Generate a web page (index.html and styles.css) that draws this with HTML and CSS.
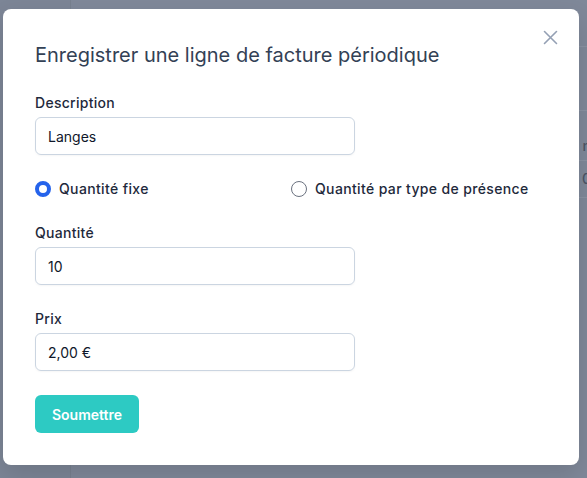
FILE: index.html
```html
<!DOCTYPE html>
<html lang="fr">
<head>
<meta charset="utf-8">
<title>Ligne de facture périodique</title>
<link rel="stylesheet" href="styles.css">
</head>
<body>
<div class="backdrop">
  <div class="bg-side"></div>
  <div class="bg-main">
    <div class="bg-row bg-head"></div>
    <div class="bg-row bg-r1"><span class="bg-text">n</span></div>
    <div class="bg-row bg-r2"><span class="bg-text">0</span></div>
    <div class="bg-row bg-r3"></div>
  </div>
</div>
<div class="modal">
  <button class="close" aria-label="Fermer">
    <svg width="15" height="15" viewBox="0 0 15 15"><path d="M1.5 1.5 L13.5 13.5 M13.5 1.5 L1.5 13.5" stroke="#94a0b4" stroke-width="1.6" stroke-linecap="round" fill="none"/></svg>
  </button>
  <h1 class="title">Enregistrer une ligne de facture périodique</h1>
  <div class="field">
    <label class="label">Description</label>
    <div class="input">Langes</div>
  </div>
  <div class="radios">
    <label class="radio"><span class="dot on"></span>Quantité fixe</label>
    <label class="radio"><span class="dot"></span>Quantité par type de présence</label>
  </div>
  <div class="field">
    <label class="label">Quantité</label>
    <div class="input">10</div>
  </div>
  <div class="field">
    <label class="label">Prix</label>
    <div class="input">2,00 €</div>
  </div>
  <button class="submit">Soumettre</button>
</div>
</body>
</html>
```
FILE: styles.css
```css
* { box-sizing: border-box; }
html, body { margin: 0; padding: 0; }
body {
  width: 587px;
  height: 478px;
  overflow: hidden;
  background: #7f8899;
  font-family: Inter, "Noto Sans", sans-serif;
  position: relative;
}
.backdrop {
  display: flex;
  height: 478px;
}
.bg-side {
  width: 70px;
  background: #7c8596;
}
.bg-main {
  flex: 1;
  border-left: 1px solid #77808f;
  padding-top: 46px;
}
.bg-row {
  border-top: 1px solid #8a92a2;
  display: flex;
  justify-content: flex-end;
  color: #4c5566;
  font-size: 14px;
  line-height: 16px;
}
.bg-head { height: 64px; }
.bg-r1 { height: 50px; align-items: flex-end; padding-bottom: 6px; }
.bg-r2 { height: 37px; align-items: center; }
.bg-r3 { height: 30px; }
.bg-text { margin-right: -4px; font-weight: 500; }

.modal {
  position: absolute;
  left: 3px;
  top: 9px;
  width: 576px;
  background: #fff;
  border-radius: 8px;
  padding: 32px;
  box-shadow: 0 10px 25px rgba(0,0,0,0.12);
}
.close {
  position: absolute;
  top: 21px;
  right: 21px;
  width: 15px;
  height: 15px;
  padding: 0;
  border: 0;
  background: none;
  display: flex;
}
.title {
  margin: 0;
  font-size: 20px;
  line-height: 28px;
  font-weight: 400;
  color: #334155;
}
.field { margin-top: 24px; }
.label {
  display: block;
  font-size: 14px;
  line-height: 20px;
  font-weight: 500;
  letter-spacing: 0.28px;
  color: #1e293b;
  margin-bottom: 4px;
}
.input {
  width: 320px;
  height: 38px;
  border: 1px solid #cbd5e1;
  border-radius: 6px;
  padding: 0 12px;
  display: flex;
  align-items: center;
  font-size: 14px;
  color: #0f172a;
  box-shadow: 0 1px 2px rgba(0,0,0,0.04);
}
.radios {
  margin-top: 24px;
  display: grid;
  grid-template-columns: 256px 256px;
}
.radio {
  display: flex;
  align-items: center;
  font-size: 14px;
  line-height: 20px;
  font-weight: 500;
  letter-spacing: 0.36px;
  color: #1e293b;
}
.dot {
  width: 16px;
  height: 16px;
  border-radius: 50%;
  border: 1px solid #6b7280;
  margin-right: 8px;
  flex: none;
}
.dot.on {
  border: 4.5px solid #2563eb;
  background: #fff;
}
.submit {
  margin-top: 24px;
  height: 38px;
  width: 104px;
  border: 0;
  border-radius: 6px;
  background: #2dcac3;
  color: #fff;
  font-family: inherit;
  font-size: 14px;
  font-weight: 600;
  display: block;
}
```
